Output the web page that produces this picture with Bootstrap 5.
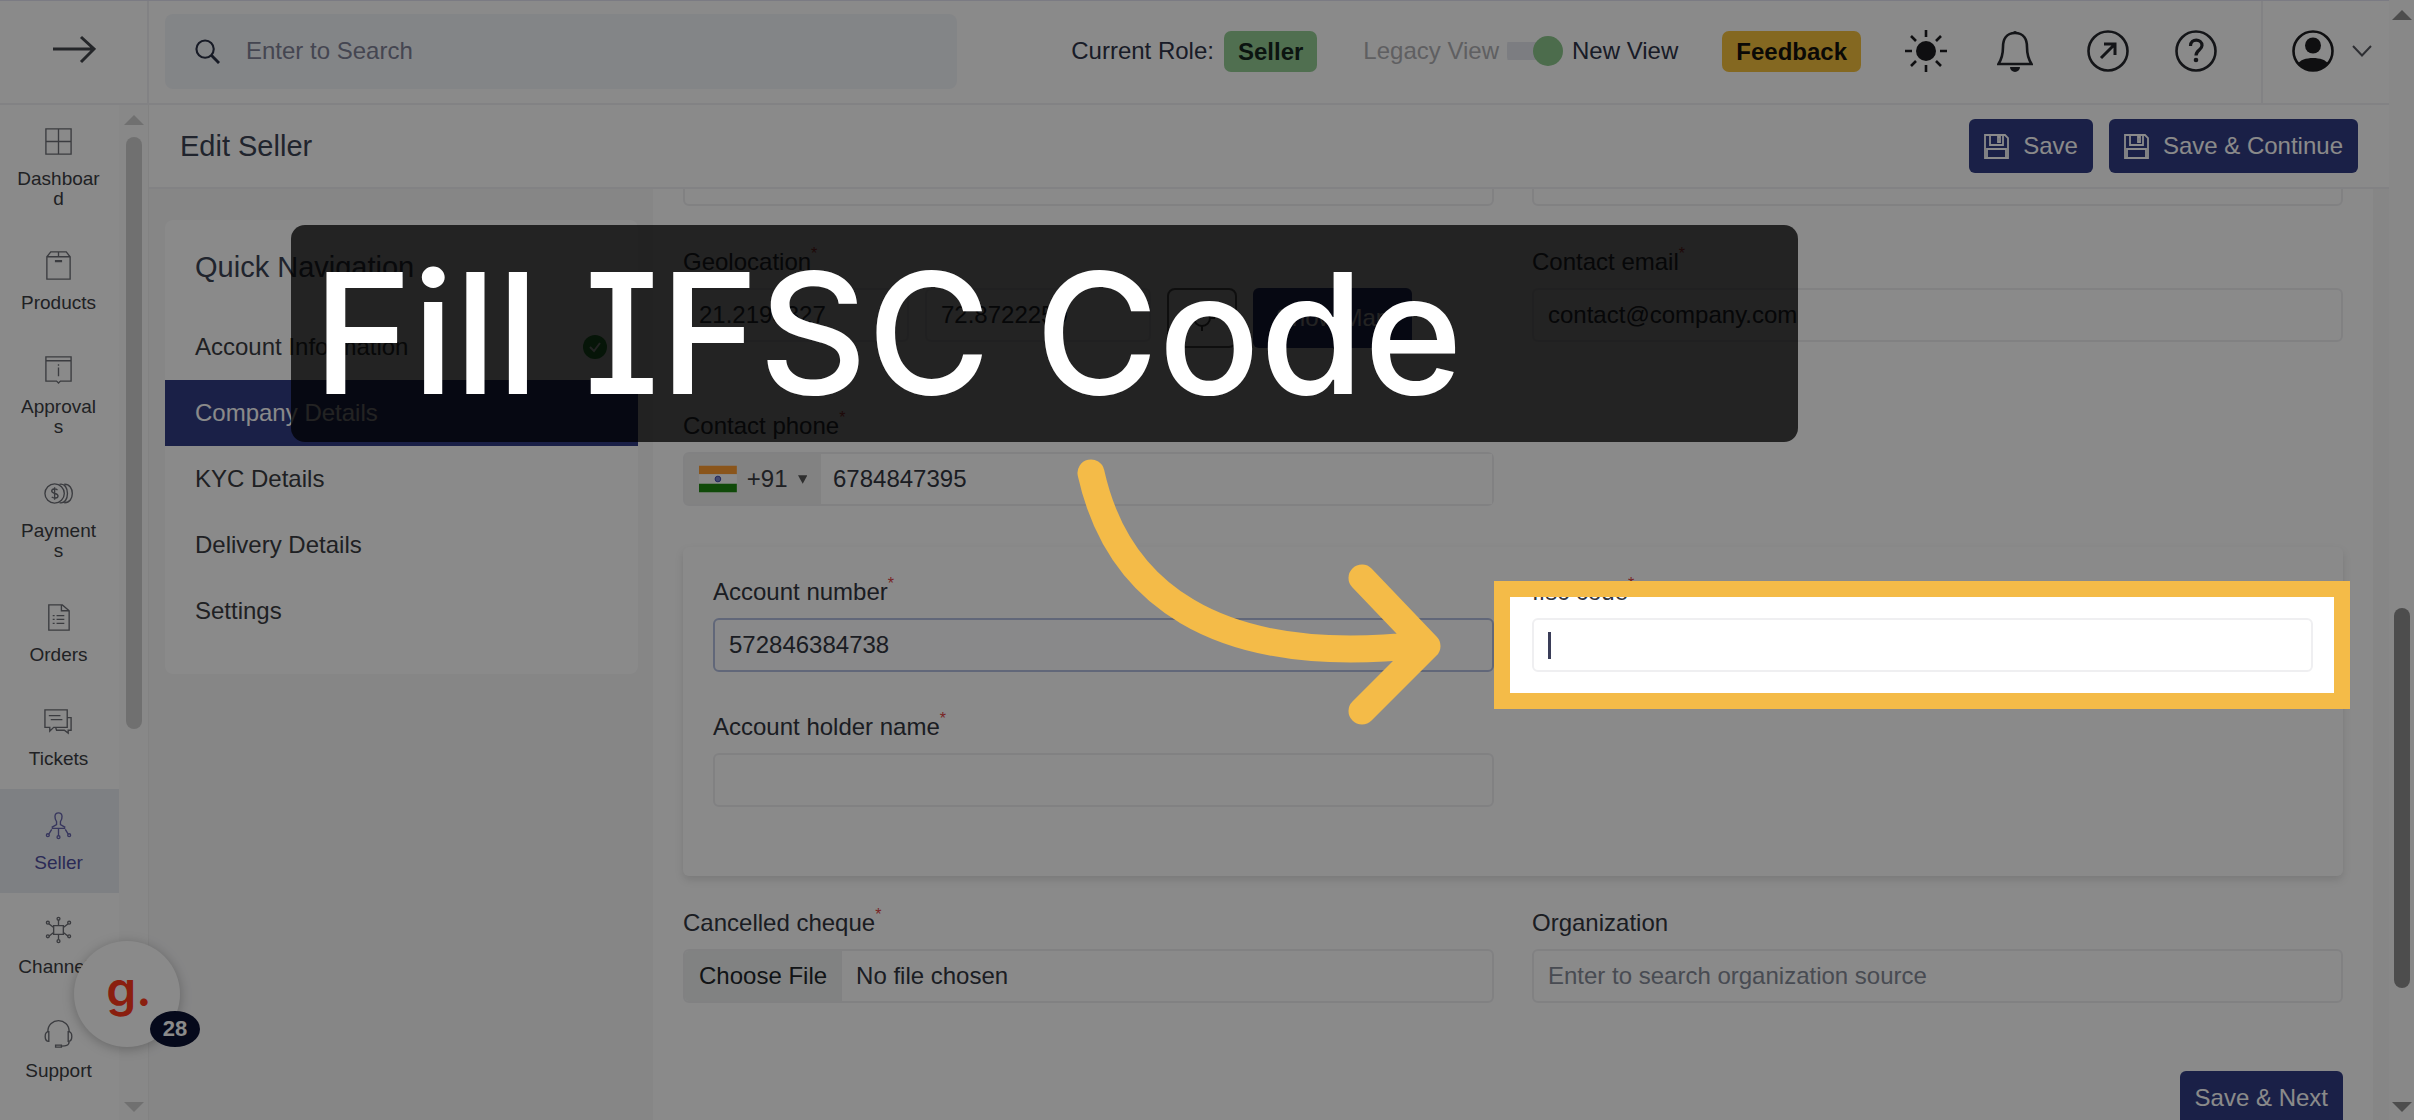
<!DOCTYPE html>
<html lang="en">
<head>
<meta charset="utf-8">
<meta name="viewport" content="width=device-width, initial-scale=1">
<title>Edit Seller</title>
<link href="https://cdn.jsdelivr.net/npm/bootstrap@5.3.0/dist/css/bootstrap.min.css" rel="stylesheet">
<style>
:root{--navy:#303c84;--line:#efeff1;--gold:#f4bb48}
body{font-family:"Liberation Sans",Arial,sans-serif;font-size:24px;line-height:36px;color:#32363f;background:#fff}
.app-shell{height:100vh;overflow:hidden;position:relative}
.top-bar{height:105px;border-bottom:2px solid #f1f1f4;border-top:1px solid #e4e4f2;color:#2f3448}
.brand-cell{width:149px;border-right:2px solid #f1f1f4}
.search-box{width:792px;height:75px;margin-left:16px;padding:0 30px;background:#f3f5fa;border-radius:8px}
.search-box input,.search-box input:focus{border:0;background:none;box-shadow:none;outline:0;font-size:24px;flex:1;color:#32363f}
.search-box input::placeholder{color:#7f8196}
.top-tools{padding-bottom:2px}
.role-tag{height:41px;line-height:41px;border:0;border-radius:7px;font-weight:700;font-size:24px;padding:0 14px;color:#16261f}
.tag-green{background:#95cd95;margin-left:10px}
.tag-gold{background:#f4c13d;color:#14120c;margin-left:44px}
.view-label{margin-left:46px}
.muted-view{color:#b0b0b4}
.view-switch{appearance:none;width:56px;height:30px;margin:0 9px 0 8px;position:relative;background:linear-gradient(#e6e7ee,#e6e7ee) 0 50%/40px 18px no-repeat;border-radius:9px}
.view-switch::before{content:"";position:absolute;right:0;top:0;width:30px;height:30px;border-radius:50%;background:#8cc88c}
.tool-icons{margin:0 44px;gap:46px}
.icon-btn{border:0;background:none;padding:0;display:flex;align-items:center}
.user-cell{width:128px;border-left:2px solid #f1f1f4;padding:0 0 2px 12px;gap:18px}
.scroll-track{background:#fbfbfb;position:relative;flex:none}
.scroll-track i{position:absolute;left:50%;transform:translateX(-50%)}
.arr-up{top:10px;border:10px solid transparent;border-top:0;border-bottom:10px solid var(--thumb)}
.arr-down{bottom:8px;border:10px solid transparent;border-bottom:0;border-top:10px solid var(--thumb)}
.thumb{width:16px;border-radius:8px;background:var(--thumb)}
.track-left{width:29px;--thumb:#cfcfcf}
.track-left .thumb{top:32px;height:592px}
.track-right{width:25px;--thumb:#8f8f8f}
.track-right .thumb{top:608px;height:380px}
.rail{width:149px;border-right:1px solid #f0f0f0}
.rail-item{display:flex;flex-direction:column;align-items:center;gap:12px;padding:21px 2px 20px 0;width:119px;min-height:104px;font-size:19px;line-height:20px;color:#3c3e44;text-decoration:none}
.rail-item span{width:83px;text-align:center;overflow-wrap:anywhere}
.rail-item svg{width:31px;height:31px;fill:none;stroke:#6d6f76;stroke-width:1.4}
.rail-item.active{background:#e9ecf2;color:#504fa0}
.rail-item.active svg{stroke:#6665ad}
.sub-bar{height:84px;border-bottom:2px solid #f1f1f4;padding:0 31px}
.heading{font-size:29px;font-weight:400;margin:0;color:#3b4354}
.btn-navy{background:var(--navy);border:0;color:#fff;font-size:24px;line-height:34px;height:54px;padding:10px 15px;border-radius:6px;gap:14px}
.btn-navy:hover{background:#27316e;color:#fff}
.side-pane{width:504px;background:#f7f7f8;padding:31px 15px 0 16px}
.quick-card{background:#fff;border-radius:8px;padding-bottom:30px}
.quick-card .heading{padding:29px 30px;line-height:36px}
.quick-card a{display:flex;align-items:center;justify-content:space-between;height:66px;padding:0 30px;color:#3a3c42;text-decoration:none}
.quick-card a.active{background:var(--navy);color:#fff}
.form-pane{overflow:hidden;padding:0 30px}
.form-scroll{margin-top:-37px}
.pane-edge{width:16px;background:#f7f7f8}
.pair{display:grid;grid-template-columns:1fr 1fr;column-gap:38px}
.form-label{display:block;margin:0 0 8px;line-height:36px}
.form-label sup{color:#e04444;font-size:16px;top:-11px}
.form-control{height:54px;font-size:24px;line-height:36px;padding:7px 14px;border:2px solid var(--line);border-radius:6px;color:#32363f}
.form-control::placeholder{color:#868b98}
.form-control::file-selector-button{padding:7px 14px;margin:-7px 14px -7px -14px;background:#eef1f1!important;border-color:var(--line)}
.form-control.is-current{border-color:#b3bfe0;background:#fdfdff}
.coord{width:226px}
.gap-a{margin-top:38px}.gap-b{margin-top:60px}.gap-c{margin-top:41px}.gap-d{margin-top:29px}.gap-e{margin-top:68px}
.locate{width:70px;height:60px;border:2px solid #6a6a6a;border-radius:8px;background:#fff;display:flex;align-items:center;justify-content:center}
.map-btn{height:60px;width:159px}
.phone-box{height:54px;border:2px solid var(--line);border-radius:6px;display:flex}
.phone-box button{border:0;background:#f1f1f1;width:136px;display:flex;align-items:center;gap:10px;padding:0 14px;color:#3a3c42}
.phone-box input{border:0;flex:1;min-width:0;padding:0 12px;color:#32363f;outline:0}
.bank-card{border-radius:6px;box-shadow:0 4px 8px rgba(0,0,0,.12);padding:27px 30px 69px}
.bank-card .pair{row-gap:37px}
.caret-line{position:absolute;left:16px;top:14px;width:3px;height:27px;background:#3a3d58}
.help-bubble{position:absolute;left:74px;top:941px;width:106px;height:106px;border-radius:50%;border:0;background:#fff;box-shadow:0 2px 12px rgba(0,0,0,.25);font:600 48px/82px "Inter",sans-serif;color:#ff3a1c;padding:0 0 10px 4px}
.help-count{position:absolute;left:76px;top:70px;width:50px;height:36px;border-radius:50%;background:#0b1233;color:#fff;font:700 22px/36px "Liberation Sans",Arial,sans-serif}
.spotlight{position:absolute;left:1494px;right:64px;top:581px;height:128px;border:16px solid var(--gold);box-shadow:0 0 0 3000px rgba(0,0,0,.46);pointer-events:none}
.caption{position:absolute;left:291px;top:225px;width:1507px;height:217px;border-radius:14px;background:rgba(0,0,0,.75);color:#fff;font:500 168px/217px "Inter",sans-serif;font-feature-settings:"cv08";padding-left:22px;white-space:nowrap}
.pointer-arrow{position:absolute;left:1070px;top:450px;width:400px;height:290px;pointer-events:none}
</style>
</head>
<body>
<div class="app-shell d-flex">
  <div class="d-flex flex-column flex-grow-1 overflow-hidden">
    <header class="top-bar d-flex align-items-stretch flex-shrink-0">
      <div class="brand-cell d-flex align-items-center justify-content-center flex-shrink-0">
        <button class="icon-btn pb-1" aria-label="Expand menu"><svg width="44" height="30" viewBox="0 0 44 30" fill="none" stroke="#44464c" stroke-width="3"><path d="M1 14H42M29 2L42 14L29 27"/></svg></button>
      </div>
      <div class="top-tools d-flex align-items-center flex-grow-1">
        <div class="search-box d-flex align-items-center gap-4">
          <svg width="25" height="25" viewBox="0 0 26 26" fill="none" stroke="#2b3246" stroke-width="2.2"><circle cx="10.500" cy="10.500" r="9"/><path d="M17 17L25 25" stroke-width="3"/></svg>
          <input type="search" placeholder="Enter to Search" aria-label="Search">
        </div>
        <div class="d-flex align-items-center ms-auto">
          <span>Current Role:</span>
          <span class="role-tag tag-green">Seller</span>
          <label class="view-label d-flex align-items-center"><span class="muted-view">Legacy View</span><input class="view-switch" type="checkbox" role="switch" checked>New View</label>
          <button class="role-tag tag-gold">Feedback</button>
          <div class="tool-icons d-flex align-items-center">
            <button class="icon-btn me-1" aria-label="Theme"><svg width="42" height="42" viewBox="0 0 42 42" stroke="#1d1d20" stroke-width="2.600"><circle cx="21" cy="21" r="10" fill="#1d1d20" stroke="none"/><path d="M21 0V7M21 35V42M0 21H7M35 21H42M6 6L11 11M31 31L36 36M36 6L31 11M11 31L6 36"/></svg></button>
            <button class="icon-btn me-2" aria-label="Notifications"><svg width="36" height="42" viewBox="0 0 36 42" fill="none" stroke="#26282e" stroke-width="2.600"><path d="M18 3C9 3 6 10 6 17C6 26 4 30 1.500 34H34.500C32 30 30 26 30 17C30 10 27 3 18 3Z"/><path d="M13 37H23A5 5 0 0 1 13 37ZM16 3A2 2 0 0 1 20 3Z" fill="#26282e" stroke="none"/></svg></button>
            <button class="icon-btn" aria-label="Open site"><svg width="42" height="42" viewBox="0 0 42 42" fill="none" stroke="#26282e" stroke-width="2.600"><circle cx="21" cy="21" r="19.500"/><path d="M14 28L28 14M17 14H28V25" stroke-width="3"/></svg></button>
            <button class="icon-btn" aria-label="Help"><svg width="42" height="42" viewBox="0 0 42 42" fill="none" stroke="#26282e" stroke-width="2.600"><circle cx="21" cy="21" r="19.500"/><path d="M15.500 16C15.500 8 27 8.500 27 15.500C27 20 21 20 21 25.500" stroke-width="3.200"/><circle cx="21" cy="30" r="2.300" fill="#26282e" stroke="none"/></svg></button>
          </div>
        </div>
      </div>
      <div class="user-cell d-flex align-items-center justify-content-center flex-shrink-0">
        <svg width="42" height="42" viewBox="0 0 42 42"><circle cx="21" cy="21" r="19.500" fill="none" stroke="#1d1d20" stroke-width="2.600"/><circle cx="21" cy="15.500" r="8" fill="#1d1d20"/><path d="M6 34C9 26 33 26 36 34C28 43 14 43 6 34Z" fill="#1d1d20"/></svg>
        <svg width="20" height="12" viewBox="0 0 20 12" fill="none" stroke="#55575e" stroke-width="2"><path d="M1 1L10 10.500L19 1"/></svg>
      </div>
    </header>

    <div class="d-flex flex-grow-1 overflow-hidden">
      <div class="rail d-flex flex-shrink-0">
        <nav>
          <a class="rail-item" href="#"><svg viewBox="0 0 32 32"><path d="M3 3H29V29H3ZM16 3V29M3 16H29"/></svg><span>Dashboard</span></a>
          <a class="rail-item" href="#"><svg viewBox="0 0 32 32"><path d="M4 7L8 2H24L28 7V30H4ZM4 7H28M16 2V7M13 11H19V12H13Z"/></svg><span>Products</span></a>
          <a class="rail-item" href="#"><svg viewBox="0 0 32 32"><path d="M3 3H29V28H18L16 30L14 28H3ZM3 7H29M16 14V23M16 10.500V12"/></svg><span>Approvals</span></a>
          <a class="rail-item" href="#"><svg viewBox="0 0 32 32"><circle cx="12" cy="16" r="10"/><path d="M17 6.500C28 4 28 28 17 25.500M22 6.500C33 6 33 26 22 25.500M15 12.500C13 10.500 9 11 9 13.500C9 16.500 15.500 15.500 15.500 18.500C15.500 21 11 21.500 9 19.500M12 9.500V22.500"/></svg><span>Payments</span></a>
          <a class="rail-item" href="#"><svg viewBox="0 0 32 32"><path d="M6 3H20L27 9V29H6ZM19 3V9H27M10 14H12M14 14H22M10 18H12M14 18H22M10 22H12M14 22H22"/></svg><span>Orders</span></a>
          <a class="rail-item" href="#"><svg viewBox="0 0 32 32"><path d="M2 4H25V22H11L7 26V22H2ZM6 10H18M8 14H20M25 12H29V25H26V28L22 25H14L13 22"/></svg><span>Tickets</span></a>
          <a class="rail-item active" href="#"><svg viewBox="0 0 32 32"><path d="M16 3C11 3 12 9 14 12V15L9 18M16 3C21 3 20 9 18 12V15L23 18M9 19H23M16 19V27M9 20L6 25M23 20L26 25"/><circle cx="16" cy="28" r="1.500"/><circle cx="5" cy="26" r="1.500"/><circle cx="27" cy="26" r="1.500"/></svg><span>Seller</span></a>
          <a class="rail-item" href="#"><svg viewBox="0 0 32 32"><path d="M11 12H21V21H11ZM16 12V6M16 21V26M11 14L6 10M21 14L26 10M11 19L6 23M21 19L26 23"/><circle cx="16" cy="5" r="1.500"/><circle cx="16" cy="28" r="1.500"/><circle cx="5" cy="9" r="1.500"/><circle cx="27" cy="9" r="1.500"/><circle cx="5" cy="23" r="1.500"/><circle cx="27" cy="23" r="1.500"/></svg><span>Channels</span></a>
          <a class="rail-item" href="#"><svg viewBox="0 0 32 32"><path d="M5 14C5 -1 27 -1 27 14M6 14C1 14 1 24 6 24ZM26 14C31 14 31 24 26 24ZM27 24C27 29 23 29 19 29M13 28H19V30H13Z"/></svg><span>Support</span></a>
        </nav>
        <div class="scroll-track track-left"><i class="arr-up"></i><i class="thumb"></i><i class="arr-down"></i></div>
      </div>

      <div class="d-flex flex-column flex-grow-1 overflow-hidden">
        <div class="sub-bar d-flex align-items-center justify-content-between flex-shrink-0">
          <h1 class="heading">Edit Seller</h1>
          <div class="d-flex gap-3">
            <button class="btn btn-navy d-flex align-items-center"><svg width="25" height="25" viewBox="0 0 25 25" fill="none" stroke="#fff" stroke-width="1.800"><path d="M1 1H21L24 4V24H1ZM6 1V11H19V1M3 24V15H22V24M14 3H16V8H14Z"/></svg>Save</button>
            <button class="btn btn-navy d-flex align-items-center"><svg width="25" height="25" viewBox="0 0 25 25" fill="none" stroke="#fff" stroke-width="1.800"><path d="M1 1H21L24 4V24H1ZM6 1V11H19V1M3 24V15H22V24M14 3H16V8H14Z"/></svg>Save &amp; Continue</button>
          </div>
        </div>
        <div class="d-flex flex-grow-1 overflow-hidden">
          <aside class="side-pane flex-shrink-0">
            <nav class="quick-card">
              <h2 class="heading">Quick Navigation</h2>
              <a href="#">Account Information<svg width="26" height="26" viewBox="0 0 26 26"><circle cx="13" cy="13" r="12" fill="#2f9a3c"/><path d="M8 13L12 17L18 9" fill="none" stroke="#fff" stroke-width="2"/></svg></a>
              <a href="#" class="active">Company Details</a>
              <a href="#">KYC Details</a>
              <a href="#">Delivery Details</a>
              <a href="#">Settings</a>
            </nav>
          </aside>
          <main class="form-pane flex-grow-1">
            <form class="form-scroll">
              <div class="pair">
                <input class="form-control" aria-label="Address line 1">
                <input class="form-control" aria-label="Address line 2">
              </div>
              <div class="pair gap-a">
                <div>
                  <label class="form-label" for="lat">Geolocation<sup>*</sup></label>
                  <div class="d-flex gap-3">
                    <input id="lat" class="form-control coord" value="21.2195327">
                    <input class="form-control coord" value="72.8722259" aria-label="Longitude">
                    <button type="button" class="locate" aria-label="Locate"><svg width="26" height="26" viewBox="0 0 26 26" fill="none" stroke="#444" stroke-width="2"><circle cx="13" cy="13" r="8"/><path d="M13 0V5M13 21V26M0 13H5M21 13H26"/></svg></button>
                    <button type="button" class="btn btn-navy map-btn">Show Map</button>
                  </div>
                </div>
                <div>
                  <label class="form-label" for="mail">Contact email<sup>*</sup></label>
                  <input id="mail" type="email" class="form-control" value="contact@company.com">
                </div>
              </div>
              <div class="pair gap-b">
                <div>
                  <label class="form-label" for="phone">Contact phone<sup>*</sup></label>
                  <div class="phone-box">
                    <button type="button" aria-label="Country code"><svg width="40" height="28" viewBox="0 0 40 28"><path fill="#ff9d33" d="M0 0H40V9H0Z"/><path fill="#fff" d="M0 9H40V19H0Z"/><path fill="#1f8a12" d="M0 19H40V28H0Z"/><circle cx="20" cy="14" r="3" fill="#7d85c9" stroke="#3c46a8"/></svg>+91<svg width="10" height="9" viewBox="0 0 10 9"><path d="M0 0H10L5 9Z" fill="#555"/></svg></button>
                    <input id="phone" type="tel" value="6784847395">
                  </div>
                </div>
              </div>
              <div class="bank-card gap-c">
                <div class="pair">
                  <div>
                    <label class="form-label" for="acc">Account number<sup>*</sup></label>
                    <input id="acc" class="form-control is-current" value="572846384738">
                  </div>
                  <div>
                    <label class="form-label" for="ifsc">Ifsc code<sup>*</sup></label>
                    <div class="position-relative"><input id="ifsc" class="form-control"><span class="caret-line"></span></div>
                  </div>
                  <div>
                    <label class="form-label" for="holder">Account holder name<sup>*</sup></label>
                    <input id="holder" class="form-control">
                  </div>
                </div>
              </div>
              <div class="pair gap-d">
                <div>
                  <label class="form-label" for="cheque">Cancelled cheque<sup>*</sup></label>
                  <input id="cheque" type="file" class="form-control">
                </div>
                <div>
                  <label class="form-label" for="org">Organization</label>
                  <input id="org" class="form-control" placeholder="Enter to search organization source">
                </div>
              </div>
              <div class="d-flex justify-content-end gap-e"><button type="button" class="btn btn-navy">Save &amp; Next</button></div>
            </form>
          </main>
          <div class="pane-edge flex-shrink-0"></div>
        </div>
      </div>
    </div>
  </div>
  <div class="scroll-track track-right"><i class="arr-up"></i><i class="thumb"></i><i class="arr-down"></i></div>

  <button class="help-bubble" aria-label="Guide">g.<span class="help-count">28</span></button>
  <div class="spotlight"></div>
  <div class="caption">Fill IFSC Code</div>
  <svg class="pointer-arrow" viewBox="1070 450 400 290" fill="none" stroke="#f4bb48" stroke-width="27" stroke-linecap="round" stroke-linejoin="round"><path d="M1091 473C1117 590 1212 668 1420 645M1362 578L1427 646L1362 711"/></svg>
</div>
<script src="https://cdn.jsdelivr.net/npm/bootstrap@5.3.0/dist/js/bootstrap.bundle.min.js"></script>
</body>
</html>
